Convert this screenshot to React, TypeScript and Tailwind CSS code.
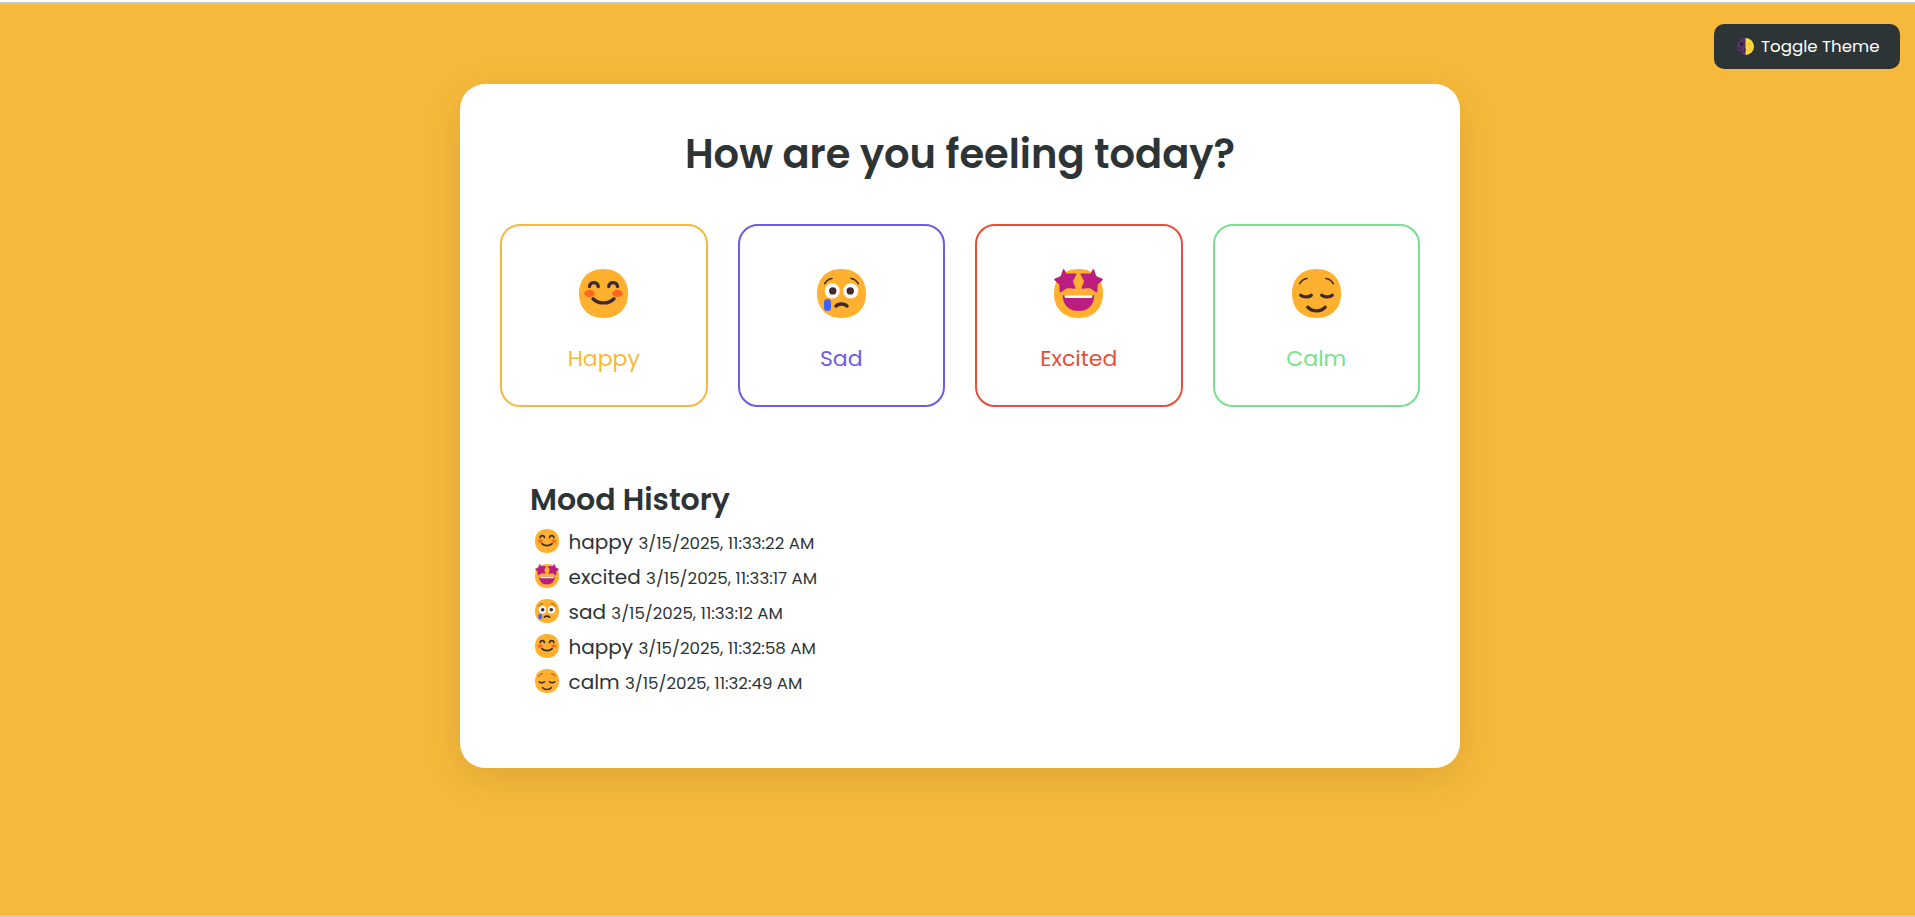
import type { ReactNode } from "react";

type Mood = "happy" | "sad" | "excited" | "calm";

const FACE =
  "M16 30C25.33 30 30 23.73 30 16C30 8.27 25.33 2 16 2C6.66 2 2 8.27 2 16C2 23.73 6.66 30 16 30Z";
const STAR =
  "M7.5 2.5L8.8 5L14.4 5L12.3 9L13.8 12.8L9.6 12.4L5.7 14.9L5.4 10.6L2.5 8L6.2 6.4Z";

const features: Record<Mood, ReactNode> = {
  happy: (
    <>
      <ellipse cx="8" cy="16" rx="3" ry="2.1" fill="#FF6723" />
      <ellipse cx="24" cy="16" rx="3" ry="2.1" fill="#FF6723" />
      <g fill="none" stroke="#402A32" strokeWidth="1.9" strokeLinecap="round">
        <path d="M8 12C8.2 9 12.8 9 13 12" />
        <path d="M19 12C19.2 9 23.8 9 24 12" />
        <path d="M10 19C13 22.2 19 22.2 22 19" />
      </g>
    </>
  ),
  sad: (
    <>
      <circle cx="10.7" cy="14.5" r="4.3" fill="#fff" />
      <circle cx="21.3" cy="14.5" r="4.3" fill="#fff" />
      <circle cx="11" cy="14.5" r="2.1" fill="#402A32" />
      <circle cx="21" cy="14.5" r="2.1" fill="#402A32" />
      <rect x="6" y="19.1" width="4" height="6.9" rx="2" fill="#3F5FFF" />
      <g fill="none" stroke="#402A32" strokeLinecap="round">
        <path strokeWidth="0.9" d="M6.4 10.4C7.4 8.5 8.8 7.6 10.6 7.4M25.6 10.4C24.6 8.5 23.2 7.6 21.4 7.4" />
        <path strokeWidth="1.9" d="M12.8 23.2C14.2 21.6 17.8 21.6 19.2 23.2" />
      </g>
    </>
  ),
  excited: (
    <>
      <g fill="#BB1D80" stroke="#BB1D80" strokeWidth="0.9" strokeLinejoin="round">
        <path d={STAR} />
        <path d={STAR} transform="translate(32 0) scale(-1 1)" />
      </g>
      <path d="M7 17H25C25 22.6 21.6 26 16 26C10.4 26 7 22.6 7 17Z" fill="#BB1D80" />
      <path d="M8 17H24V17.6Q24 18.5 23.1 18.5H8.9Q8 18.5 8 17.6Z" fill="#fff" />
    </>
  ),
  calm: (
    <g fill="none" stroke="#402A32" strokeLinecap="round">
      <path strokeWidth="0.9" d="M6.4 10.4C7.4 8.5 8.8 7.6 10.6 7.4M25.6 10.4C24.6 8.5 23.2 7.6 21.4 7.4" />
      <path strokeWidth="1.9" d="M7 17C8.5 18.3 11.7 18.3 13 17M19 17C20.4 18.3 23.6 18.3 25 17" />
      <path strokeWidth="1.9" d="M11 23.8C13.4 26.6 18.6 26.6 21 23.8" />
    </g>
  ),
};

function Emoji({ mood, className }: { mood: Mood; className: string }) {
  return (
    <svg viewBox="2 2 28 28" className={className} aria-hidden="true">
      <path d={FACE} fill="#FFB02E" />
      {features[mood]}
    </svg>
  );
}

function Moon() {
  return (
    <svg viewBox="0 0 28 28" className="h-[17px] w-[17px]" aria-hidden="true">
      <path d="M14 0A14 14 0 0 0 14 28Z" fill="#533566" />
      <path d="M14 0A14 14 0 0 1 14 28Z" fill="#FCD53F" />
      <circle cx="7.5" cy="10" r="3.2" fill="#321B41" />
      <circle cx="4.6" cy="17" r="1.4" fill="#321B41" />
      <path d="M14 16.5A3.8 3.8 0 0 0 14 23Z" fill="#321B41" />
      <circle cx="6.5" cy="22.5" r="1.5" fill="#321B41" />
      <circle cx="20.5" cy="9.5" r="1.8" fill="#F9C23C" />
      <circle cx="22" cy="19" r="1.3" fill="#F9C23C" />
    </svg>
  );
}

const moods: { mood: Mood; label: string; color: string }[] = [
  { mood: "happy", label: "Happy", color: "border-[#f6b93b] text-[#f6b93b]" },
  { mood: "sad", label: "Sad", color: "border-[#6c5ce7] text-[#6c5ce7]" },
  { mood: "excited", label: "Excited", color: "border-[#e55039] text-[#e55039]" },
  { mood: "calm", label: "Calm", color: "border-[#78e08f] text-[#78e08f]" },
];

const history: { mood: Mood; time: string }[] = [
  { mood: "happy", time: "3/15/2025, 11:33:22 AM" },
  { mood: "excited", time: "3/15/2025, 11:33:17 AM" },
  { mood: "sad", time: "3/15/2025, 11:33:12 AM" },
  { mood: "happy", time: "3/15/2025, 11:32:58 AM" },
  { mood: "calm", time: "3/15/2025, 11:32:49 AM" },
];

export default function App() {
  return (
    <div className="relative flex h-[917px] flex-col items-center border-t-2 border-b-2 border-t-white border-b-[#c8c8c8] bg-[#f6b93b] font-[Poppins,Inter,sans-serif] text-[#2d3436]">
      <div className="h-[2px] w-full shrink-0 bg-[#c8c8c8]" />
      <button className="absolute top-[22px] right-[15px] flex h-[45px] w-[186px] items-center rounded-[10px] bg-[#2d3436] pl-[23px] text-[16.67px] text-white">
        <Moon />
        <span className="ml-[7px] whitespace-nowrap">Toggle Theme</span>
      </button>
      <main className="mt-[80px] ml-[5px] flex h-[684px] w-[1000px] shrink-0 flex-col rounded-[25px] bg-white px-10 shadow-[0_10px_40px_rgba(0,0,0,0.1)]">
        <h1 className="mt-[40px] h-[60px] text-center text-[40px] leading-[60px] font-semibold whitespace-nowrap">
          How are you feeling today?
        </h1>
        <div className="mt-[40px] grid grid-cols-4 gap-[30px]">
          {moods.map((m) => (
            <button
              key={m.mood}
              className={`flex h-[183px] flex-col items-center rounded-[20px] border-2 ${m.color}`}
            >
              <Emoji mood={m.mood} className="mt-[43px] h-[49px] w-[49px] shrink-0 overflow-visible" />
              <span className="mt-[24px] text-[22px] leading-[34px]">{m.label}</span>
            </button>
          ))}
        </div>
        <section className="mt-[70px] px-[30px]">
          <h2 className="h-[45px] text-[30px] leading-[45px] font-semibold">Mood History</h2>
          <ul className="mt-[3px]">
            {history.map((h) => (
              <li key={h.time} className="flex h-[35px] items-baseline pl-[4.5px]">
                <Emoji mood={h.mood} className="mr-[10px] h-6 w-6 translate-y-[4px] overflow-visible" />
                <span className="text-[20px] leading-[35px] whitespace-nowrap">
                  {h.mood} <span className="text-[16.67px]">{h.time}</span>
                </span>
              </li>
            ))}
          </ul>
        </section>
      </main>
    </div>
  );
}
